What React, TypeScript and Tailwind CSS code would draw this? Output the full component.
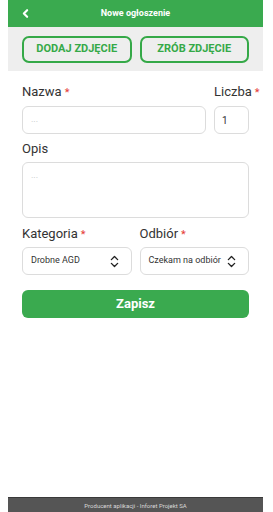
import React from "react";
import { ChevronLeft, ChevronsUpDown } from "lucide-react";

const Label = ({ text, required }: { text: string; required?: boolean }) => (
  <div className="h-4 whitespace-nowrap text-[13px] leading-4 text-[#333]">
    {text}
    {required && <span className="ml-[3px] text-[11px] text-[#e53935]">*</span>}
  </div>
);

const Select = ({ value }: { value: string }) => (
  <div className="flex h-7 w-full items-center justify-between rounded-[6px] border border-[#dcdcdc] bg-white pl-2 pr-[9px]">
    <span className="text-[9px] text-[#333]">{value}</span>
    <ChevronsUpDown size={15} strokeWidth={2.2} className="text-[#222]" />
  </div>
);

export default function App() {
  return (
    <div className="flex min-h-screen flex-col bg-white font-['Roboto',sans-serif]">
      <div className="ml-2 mr-[10px] flex flex-1 flex-col">
        {/* Header */}
        <div className="relative flex h-[27px] items-center justify-center bg-[#3aaa4f]">
          <ChevronLeft size={13} strokeWidth={4} className="absolute left-[11px] top-[7px] text-white" />
          <span className="text-[9px] font-bold text-white">Nowe ogłoszenie</span>
        </div>

        {/* Photo buttons */}
        <div className="flex gap-2 bg-[#eeeeee] px-[14px] pb-2 pt-[9px]">
          <button className="flex h-[27px] flex-1 items-center justify-center rounded-[7px] border-2 border-[#35a948] text-[11px] font-bold text-[#35a948]">
            DODAJ ZDJĘCIE
          </button>
          <button className="flex h-[27px] flex-1 items-center justify-center rounded-[7px] border-2 border-[#35a948] text-[11px] font-bold text-[#35a948]">
            ZRÓB ZDJĘCIE
          </button>
        </div>

        {/* Form */}
        <div className="flex flex-col px-[14px] pt-[13px]">
          <div className="flex gap-2">
            <div className="flex flex-1 flex-col gap-[6px]">
              <Label text="Nazwa" required />
              <div className="flex h-7 items-center rounded-[6px] border border-[#dcdcdc] px-2 text-[9px] text-[#c4c4c4]">
                ...
              </div>
            </div>
            <div className="flex w-[35px] flex-col gap-[6px]">
              <Label text="Liczba" required />
              <div className="flex h-7 items-center rounded-[6px] border border-[#dcdcdc] px-[7px] text-[10px] text-[#333]">
                1
              </div>
            </div>
          </div>

          <div className="mt-[7px] flex flex-col gap-[5px]">
            <Label text="Opis" />
            <div className="h-[56px] rounded-[6px] border border-[#dcdcdc] px-2 pt-[6px] text-[9px] leading-3 text-[#c4c4c4]">
              ...
            </div>
          </div>

          <div className="mt-2 flex gap-2">
            <div className="flex flex-1 flex-col gap-[5px]">
              <Label text="Kategoria" required />
              <Select value="Drobne AGD" />
            </div>
            <div className="flex flex-1 flex-col gap-[5px]">
              <Label text="Odbiór" required />
              <Select value="Czekam na odbiór" />
            </div>
          </div>

          <button className="mt-[15px] flex h-7 items-center justify-center rounded-[6px] bg-[#3aaa4f] text-[13px] font-bold text-white">
            Zapisz
          </button>
        </div>

        {/* Footer */}
        <div className="mt-auto flex h-[15px] items-center justify-center border-t border-[#3a3a3a] bg-[#555555]">
          <span className="text-[6px] text-[#d8d8d8]">Producent aplikacji - Inforet Projekt SA</span>
        </div>
      </div>
    </div>
  );
}
